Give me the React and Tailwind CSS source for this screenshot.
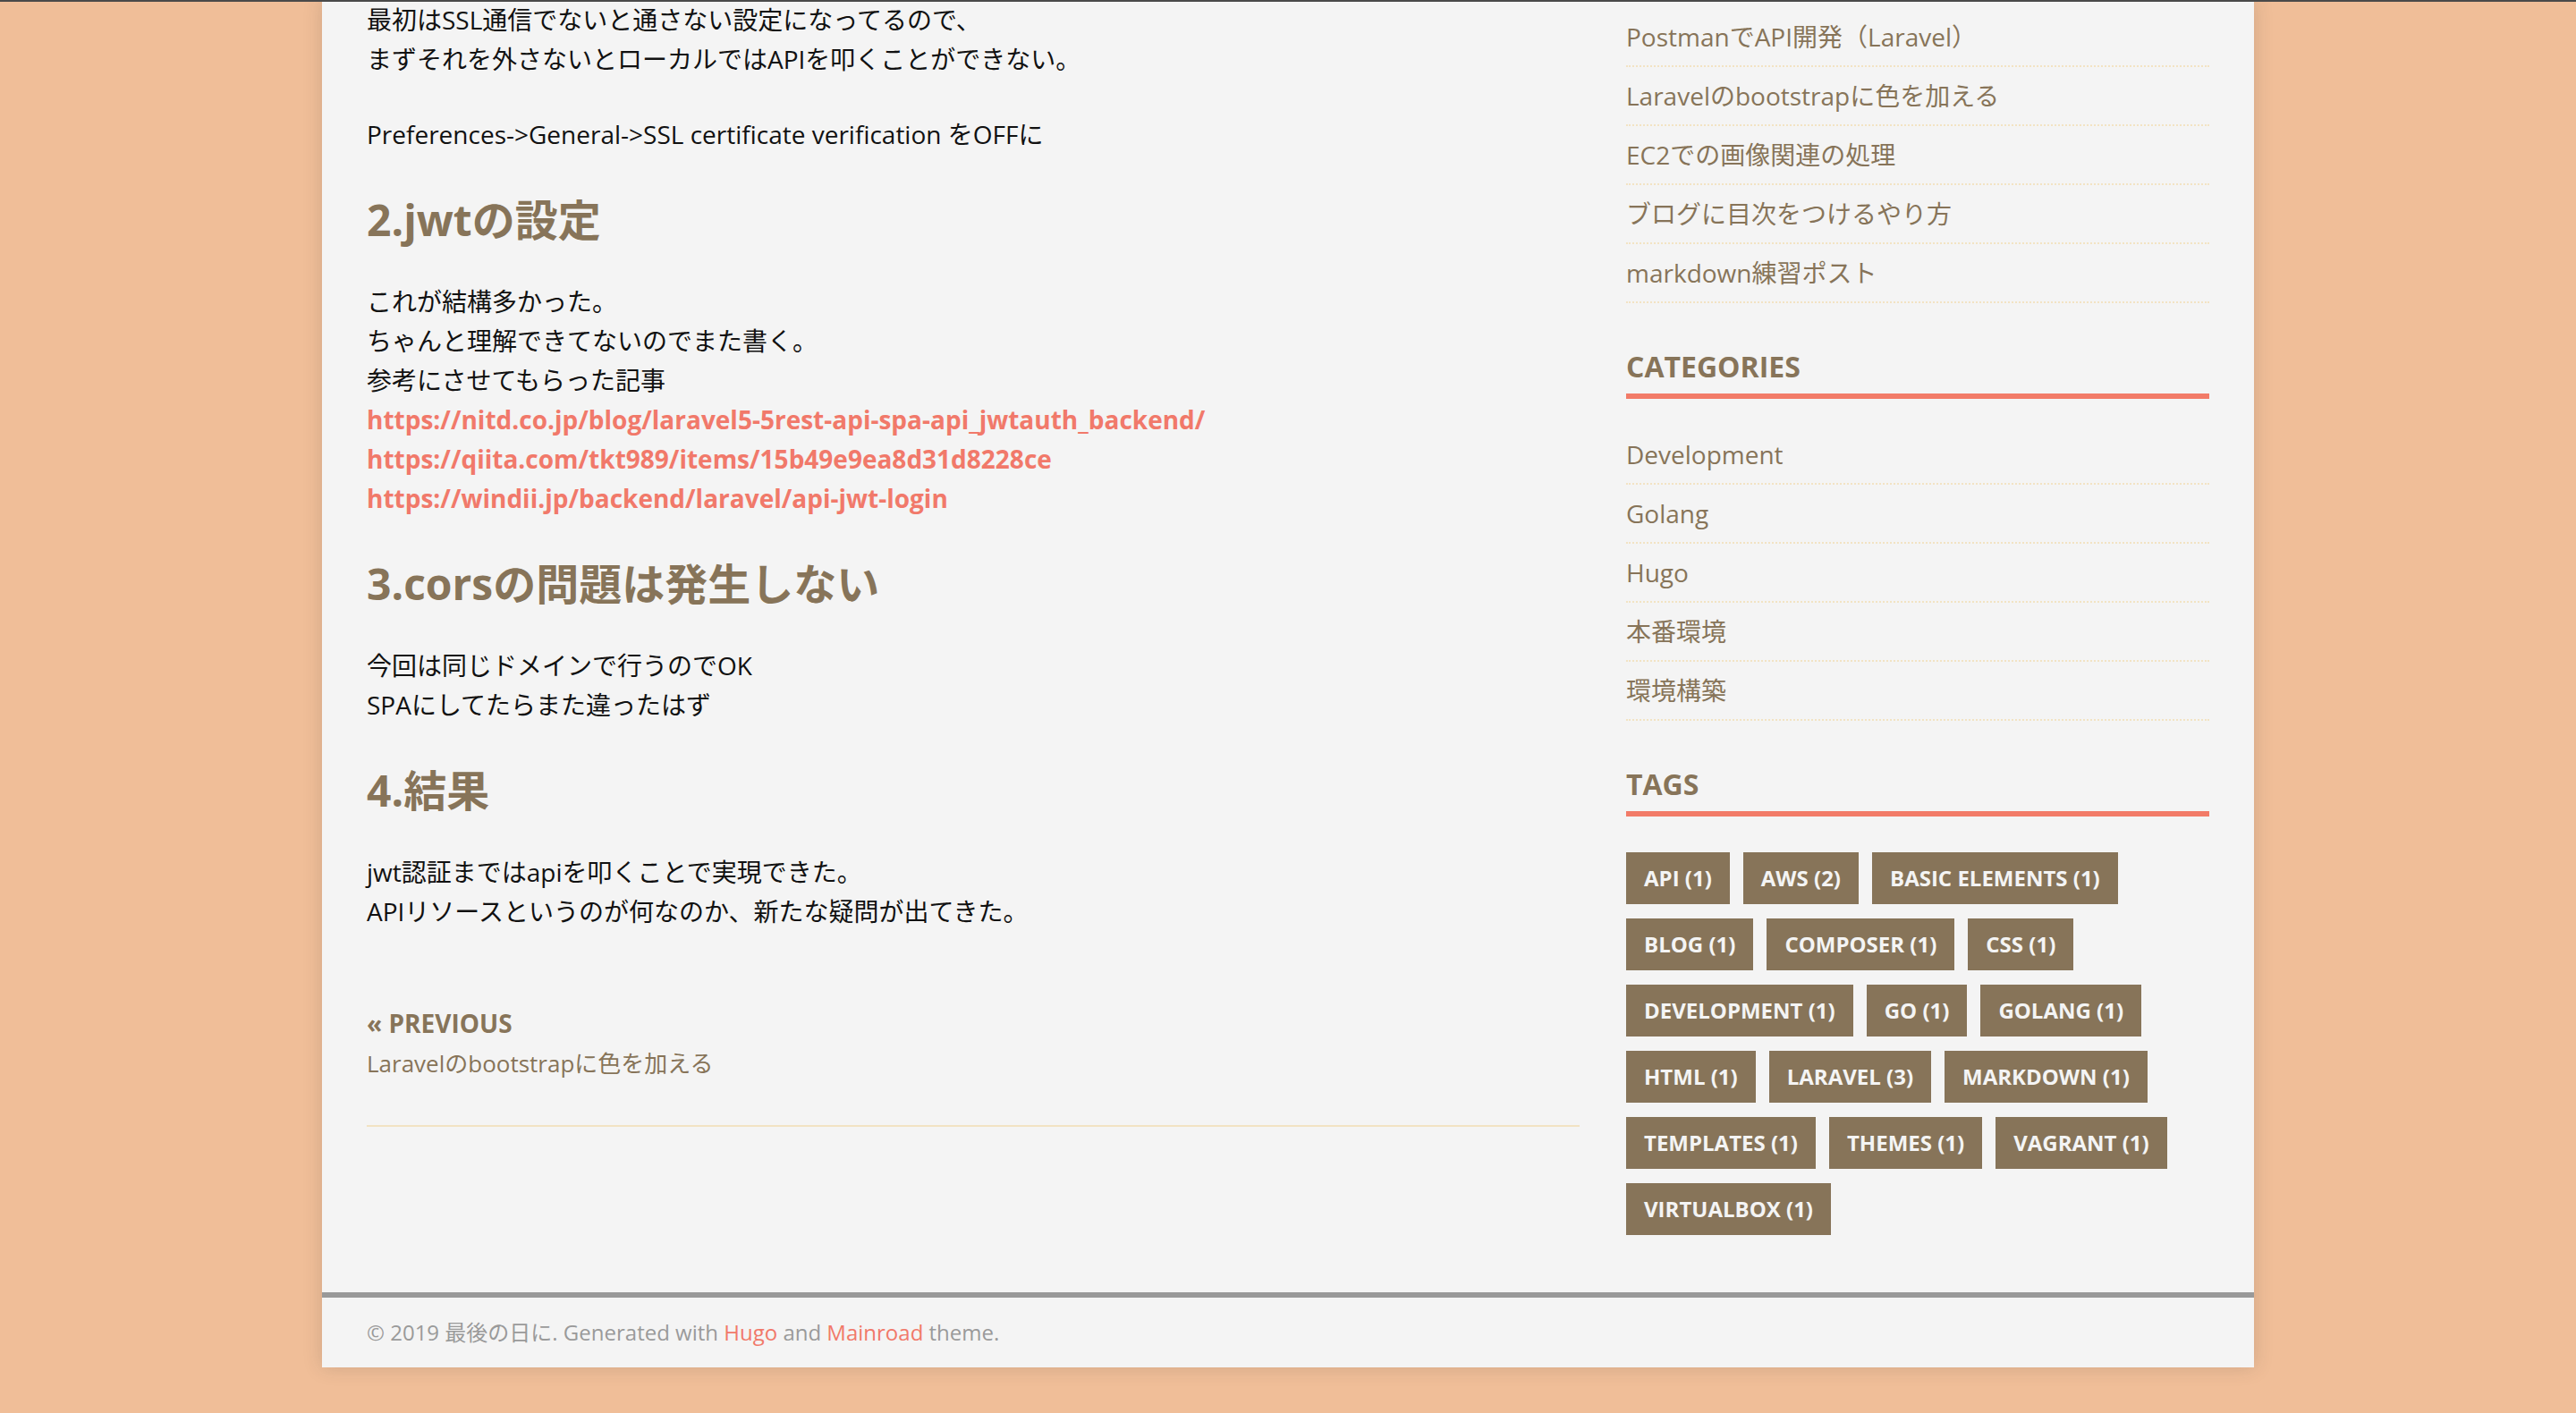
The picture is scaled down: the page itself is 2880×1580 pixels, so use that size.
import React from "react";

const recent = [
  "PostmanでAPI開発（Laravel）",
  "Laravelのbootstrapに色を加える",
  "EC2での画像関連の処理",
  "ブログに目次をつけるやり方",
  "markdown練習ポスト",
];

const categories = ["Development", "Golang", "Hugo", "本番環境", "環境構築"];

const tags = [
  "API (1)",
  "AWS (2)",
  "BASIC ELEMENTS (1)",
  "BLOG (1)",
  "COMPOSER (1)",
  "CSS (1)",
  "DEVELOPMENT (1)",
  "GO (1)",
  "GOLANG (1)",
  "HTML (1)",
  "LARAVEL (3)",
  "MARKDOWN (1)",
  "TEMPLATES (1)",
  "THEMES (1)",
  "VAGRANT (1)",
  "VIRTUALBOX (1)",
];

function WidgetTitle({ children }) {
  return (
    <h4 className="text-[32px] leading-[44px] font-bold uppercase text-[#877459] pb-[8px] border-b-[6px] border-[#f27b68]">
      {children}
    </h4>
  );
}

function WidgetList({ items }) {
  return (
    <ul>
      {items.map((t) => (
        <li
          key={t}
          className="pt-[10px] pb-[10px] border-b-2 border-dotted border-[#f2e3c3] text-[28px] leading-[44px] text-[#877459]"
        >
          <a>{t}</a>
        </li>
      ))}
    </ul>
  );
}

function H2({ children }) {
  return (
    <h2 className="mt-[45px] mb-[40px] text-[48px] leading-[58px] font-bold text-[#877459]">
      {children}
    </h2>
  );
}

function Link({ children }) {
  return <a className="font-bold text-[#f1796a]">{children}</a>;
}

export default function App() {
  return (
    <div className="relative min-h-[1580px] bg-[#f0be98] font-['Open_Sans','Noto_Sans_CJK_JP',sans-serif]">
      <div className="absolute top-0 left-0 right-0 h-[2px] bg-[#4a4a4a] z-10" />
      <div className="mx-auto w-[2160px] bg-[#f4f4f4] shadow-[0_0_20px_rgba(50,50,50,0.17)]">
        <div className="flex justify-between px-[50px]">
          <main className="w-[1356px] text-[28px] leading-[44px] text-[#111]">
            <p className="mb-[40px]">
              最初はSSL通信でないと通さない設定になってるので、
              <br />
              まずそれを外さないとローカルではAPIを叩くことができない。
            </p>
            <p>Preferences-&gt;General-&gt;SSL certificate verification をOFFに</p>
            <H2>2.jwtの設定</H2>
            <p>
              これが結構多かった。
              <br />
              ちゃんと理解できてないのでまた書く。
              <br />
              参考にさせてもらった記事
              <br />
              <Link>https://nitd.co.jp/blog/laravel5-5rest-api-spa-api_jwtauth_backend/</Link>
              <br />
              <Link>https://qiita.com/tkt989/items/15b49e9ea8d31d8228ce</Link>
              <br />
              <Link>https://windii.jp/backend/laravel/api-jwt-login</Link>
            </p>
            <H2>3.corsの問題は発生しない</H2>
            <p>
              今回は同じドメインで行うのでOK
              <br />
              SPAにしてたらまた違ったはず
            </p>
            <H2>4.結果</H2>
            <p>
              jwt認証まではapiを叩くことで実現できた。
              <br />
              APIリソースというのが何なのか、新たな疑問が出てきた。
            </p>
            <nav className="mt-[81px]">
              <div className="text-[28px] leading-[44px] font-bold uppercase text-[#877459]">
                « Previous
              </div>
              <div className="mt-[2px] text-[26px] leading-[42px] text-[#877459]">
                Laravelのbootstrapに色を加える
              </div>
            </nav>
            <div className="mt-[48px] h-[2px] bg-[#f2e3c3]" />
          </main>
          <aside className="w-[652px] pt-[9px] pb-[64px]">
            <WidgetList items={recent} />
            <div className="mt-[49px]">
              <WidgetTitle>Categories</WidgetTitle>
              <div className="mt-[30px]">
                <WidgetList items={categories} />
              </div>
            </div>
            <div className="mt-[49px]">
              <WidgetTitle>Tags</WidgetTitle>
              <div className="mt-[40px] flex flex-wrap gap-x-[15px] gap-y-[16px]">
                {tags.map((t) => (
                  <a
                    key={t}
                    className="h-[58px] px-[20px] text-[24px] leading-[58px] font-bold text-[#f4f4f4] bg-[#877459] whitespace-nowrap"
                  >
                    {t}
                  </a>
                ))}
              </div>
            </div>
          </aside>
        </div>
        <footer className="border-t-[6px] border-[#999999] px-[50px] py-[20px] text-[24px] leading-[38px] text-[#9a9a9a]">
          © 2019 最後の日に. Generated with <a className="text-[#f1796a]">Hugo</a> and{" "}
          <a className="text-[#f1796a]">Mainroad</a> theme.
        </footer>
      </div>
    </div>
  );
}
